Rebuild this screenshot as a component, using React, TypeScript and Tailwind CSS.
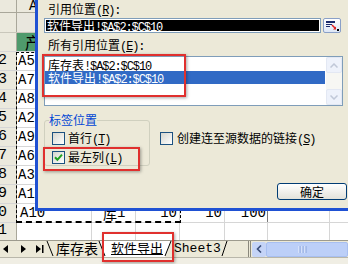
import React from "react";

const A = ({ children }: { children: React.ReactNode }) => (
  <span className="font-['Liberation_Mono'] text-[12px] tracking-[-1.1px]">{children}</span>
);

function Check({ checked = false }: { checked?: boolean }) {
  return (
    <span className="flex h-[13px] w-[13px] shrink-0 items-center justify-center border border-[#1c5180] bg-linear-to-br from-[#d6d6ce] to-white">
      {checked && (
        <svg width="9" height="9" viewBox="0 0 9 9">
          <path d="M1 4.3 L3.4 6.8 L8 1.6" fill="none" stroke="#21a121" strokeWidth="2" />
        </svg>
      )}
    </span>
  );
}

const dataRows = [
  { n: "2", a: "A5" },
  { n: "3", a: "A7" },
  { n: "4", a: "A8" },
  { n: "5", a: "A2" },
  { n: "6", a: "A9" },
  { n: "7", a: "A6" },
  { n: "8", a: "A3" },
  { n: "9", a: "A1" },
];

function RowHead({ n }: { n: string }) {
  return (
    <div className="flex w-[17px] shrink-0 items-end justify-end overflow-hidden border-r border-[#a9a79a] bg-[#ebe9dd] pb-[2px] pr-[9px] font-['Liberation_Mono'] text-[15px] leading-[14px]">
      {n}
    </div>
  );
}

function Rest() {
  return (
    <>
      <div className="w-[44px] shrink-0 border-r border-[#d6d6d6]" />
      <div className="w-[44px] shrink-0 border-r border-[#d6d6d6]" />
      <div className="w-[45px] shrink-0 border-r border-[#d6d6d6]" />
      <div className="w-[43px] shrink-0 border-r border-[#d6d6d6]" />
      <div className="w-[62px] shrink-0 border-r border-[#d6d6d6]" />
      <div className="flex-1" />
    </>
  );
}

export default function App() {
  return (
    <div className="relative h-[264px] w-[348px] overflow-hidden bg-white font-['Noto_Sans_CJK_SC'] text-black">
      {/* spreadsheet */}
      <div className="flex flex-col">
        <div className="flex h-[13px] border-b border-[#a9a79a] bg-[#ebe9dd]">
          <div className="w-[17px] shrink-0 border-r border-[#a9a79a]" />
          <div className="pl-[12px] font-['Liberation_Mono'] text-[14px] leading-[12px]">A</div>
        </div>
        <div className="flex h-[20px] border-b border-[#c9c7bb] bg-[#e9e7de]">
          <div className="w-[17px] shrink-0 border-r border-[#a9a79a] bg-[#ebe9dd]" />
          <div className="w-[75px] shrink-0 border-r border-[#d6d6d6]" />
        </div>
        <div className="flex h-[19px] border-b border-[#d6d6d6]">
          <RowHead n="" />
          <div className="flex w-[75px] shrink-0 items-end border-r border-[#d6d6d6] bg-[#4f9a6c] pb-[1px] pl-[8px] text-[16px] leading-[16px]">
            产品
          </div>
          <Rest />
        </div>
        {dataRows.map((r) => (
          <div key={r.n} className="flex h-[19px] border-b border-[#d6d6d6]">
            <RowHead n={r.n} />
            <div className="flex w-[75px] shrink-0 items-end border-r border-[#d6d6d6] pb-[2px] pl-[1px] font-['Liberation_Mono'] text-[14px] leading-[13px]">
              {r.a}
            </div>
            <Rest />
          </div>
        ))}
        <div className="flex h-[19px] border-b border-[#d6d6d6]">
          <RowHead n="10" />
          <div className="flex w-[75px] shrink-0 items-end border-r border-[#d6d6d6] pb-[2px] pl-[3px] font-['Liberation_Mono'] text-[14px] leading-[13px]">
            A10
          </div>
          <div className="flex w-[44px] shrink-0 items-end border-r border-[#d6d6d6] pb-[2px] pl-[11px] text-[14px] leading-[13px]">
            库<span className="font-['Liberation_Mono']">1</span>
          </div>
          <div className="flex w-[44px] shrink-0 items-end justify-end border-r border-[#d6d6d6] pb-[2px] pr-[2px] font-['Liberation_Mono'] text-[14px] leading-[13px]">
            10
          </div>
          <div className="flex w-[45px] shrink-0 items-end justify-end border-r border-[#d6d6d6] pb-[2px] pr-[2px] font-['Liberation_Mono'] text-[14px] leading-[13px]">
            10
          </div>
          <div className="flex w-[43px] shrink-0 items-end justify-end border-r border-[#7a7a7a] pb-[2px] pr-[1px] font-['Liberation_Mono'] text-[14px] leading-[13px]">
            100
          </div>
          <div className="w-[62px] shrink-0 border-r border-[#d6d6d6]" />
          <div className="flex-1" />
        </div>
        <div className="flex h-[17px]">
          <RowHead n="11" />
          <div className="w-[75px] shrink-0 border-r border-[#d6d6d6]" />
          <Rest />
        </div>

        {/* sheet tabs bar */}
        <div className="flex h-[24px] flex-col border-t border-[#9d9b8e] bg-[#ece9d8]">
          <div className="flex h-[16px] items-center">
            <div className="flex w-[45px] shrink-0 items-center pl-[3px]">
              <svg width="6" height="8" viewBox="0 0 6 8">
                <path d="M0 4 L5 0 L5 8 Z" fill="#000" />
              </svg>
              <svg className="ml-[11px]" width="6" height="8" viewBox="0 0 6 8">
                <path d="M1 0 L6 4 L1 8 Z" fill="#000" />
              </svg>
              <svg className="ml-[10px]" width="8" height="8" viewBox="0 0 8 8">
                <path d="M0 0 L5 4 L0 8 Z" fill="#000" />
                <rect x="6" y="0" width="1.5" height="8" fill="#000" />
              </svg>
            </div>
            {/* tab 1 */}
            <svg width="9" height="16" viewBox="0 0 9 16" className="shrink-0">
              <path d="M2 0 L8 15" stroke="#000" strokeWidth="1" fill="none" />
            </svg>
            <div className="h-[16px] pl-[2px] text-[14px] leading-[15px]">库存表</div>
            {/* active tab */}
            <svg width="9" height="16" viewBox="0 0 9 16" className="shrink-0">
              <path d="M1 0 L9 0 L9 16 L7 16 Z" fill="#fff" />
              <path d="M1 0 L7 15" stroke="#000" strokeWidth="1" fill="none" />
            </svg>
            <div className="h-[16px] bg-white pl-[4px] pr-[1px] text-[13px] leading-[14px] underline underline-offset-[1px]">
              软件导出
            </div>
            <svg width="8" height="16" viewBox="0 0 8 16" className="shrink-0">
              <path d="M0 0 L7 0 L1 16 L0 16 Z" fill="#fff" />
              <path d="M1 15 L7 0" stroke="#000" strokeWidth="1" fill="none" />
            </svg>
            <div className="h-[16px] pl-[2px] font-['Liberation_Mono'] text-[13px] leading-[15px]">
              Sheet3
            </div>
            <svg width="8" height="16" viewBox="0 0 8 16" className="shrink-0">
              <path d="M1 15 L6 0" stroke="#000" strokeWidth="1" fill="none" />
            </svg>
            <div className="flex-1" />
            <div className="h-[16px] w-[3px] border-l border-r border-[#8a887c] bg-[#ece9d8]" />
            <div className="ml-[1px] flex h-[15px] w-[14px] items-center justify-center rounded-[2px] bg-[#c5d4f7]">
              <svg width="6" height="8" viewBox="0 0 6 8">
                <path d="M5 0.5 L1.5 4 L5 7.5" stroke="#3b4e7a" strokeWidth="1.6" fill="none" />
              </svg>
            </div>
            <div className="flex h-[15px] w-[82px] items-center justify-center rounded-[2px] border border-[#a8bff0] bg-[#bccff8] pr-[10px]">
              <svg width="9" height="7" viewBox="0 0 9 7">
                <path d="M1 0 V7 M4 0 V7 M7 0 V7" stroke="#eef3ff" strokeWidth="1" />
                <path d="M2 0 V7 M5 0 V7 M8 0 V7" stroke="#8ca6dc" strokeWidth="1" />
              </svg>
            </div>
          </div>
          <div className="flex-1 border-t border-[#b9b7aa] bg-[#f0eee4]" />
        </div>
      </div>

      {/* copy range marching ants */}
      <div className="absolute left-[16px] top-[52px] h-[171px] w-[165px] border-l border-r border-t border-b-2 border-dashed border-black" />

      {/* dialog */}
      <div className="absolute left-[35px] top-0 h-[211px] w-[313px] border-b-[3px] border-l-[3px] border-[#1f51d3] bg-[#ece9d8] text-[12px] leading-[14px]">
        <div className="flex flex-col">
          <div className="ml-[10px] mt-[2px] h-[14px]">
            引用位置<A>(<u>R</u>):</A>
          </div>
          <div className="ml-[6px] mt-[2px] flex h-[15px]">
            <div className="flex w-[277px] border border-[#7f9db9] bg-white p-[1px]">
              <div className="flex-1 whitespace-nowrap bg-black pl-[1px] text-[12px] leading-[11px] text-white">
                软件导出<A>!$A$2:$C$10</A>
              </div>
            </div>
            <div className="ml-[2px] flex h-[15px] w-[18px] items-center justify-center rounded-[2px] border border-[#8aa0c8] bg-linear-to-b from-white to-[#dde6f5]">
              <svg width="13" height="10" viewBox="0 0 13 10">
                <rect x="0" y="0" width="9" height="2" fill="#1c2c6c" />
                <rect x="0" y="3" width="6" height="1" fill="#1c2c6c" />
                <rect x="0" y="5" width="4" height="1" fill="#1c2c6c" />
                <path d="M6 4 L9.5 7.5" stroke="#e02020" strokeWidth="1.5" />
                <path d="M7 8.5 L10 8.5 L10 5.5 Z" fill="#e02020" />
                <rect x="11" y="8" width="2" height="2" fill="#000" />
              </svg>
            </div>
          </div>
          <div className="ml-[10px] mt-[5px] h-[14px]">
            所有引用位置<A>(<u>E</u>):</A>
          </div>
          <div className="ml-[6px] mt-[4px] flex h-[50px] w-[299px] border border-[#7f9db9] bg-white">
            <div className="mr-[1px] flex flex-1 flex-col pt-[1px]">
              <div className="h-[13px] whitespace-nowrap pl-[3px] leading-[13px]">
                库存表<A>!$A$2:$C$10</A>
              </div>
              <div className="h-[13px] whitespace-nowrap bg-[#316ac5] pl-[3px] leading-[13px] text-white">
                软件导出<A>!$A$2:$C$10</A>
              </div>
            </div>
            <div className="flex w-[16px] flex-col justify-between bg-[#f7f7f3]">
              <div className="flex h-[16px] items-center justify-center rounded-[2px] border border-[#e3e8f3] bg-[#eef2fb]">
                <svg width="8" height="5" viewBox="0 0 8 5">
                  <path d="M0.5 4.5 L4 1 L7.5 4.5" stroke="#c0c8d8" strokeWidth="1.5" fill="none" />
                </svg>
              </div>
              <div className="flex h-[16px] items-center justify-center rounded-[2px] border border-[#e3e8f3] bg-[#eef2fb]">
                <svg width="8" height="5" viewBox="0 0 8 5">
                  <path d="M0.5 0.5 L4 4 L7.5 0.5" stroke="#c0c8d8" strokeWidth="1.5" fill="none" />
                </svg>
              </div>
            </div>
          </div>
          <div className="ml-[6px] mt-[7px] flex h-[53px]">
            <fieldset className="h-[53px] w-[106px] rounded-[3px] border border-[#d0d0bf] px-[4px]">
              <legend className="px-0 leading-[14px] text-[#0046d5]">标签位置</legend>
              <div className="mt-[5px] flex h-[13px] items-center pl-[3px]">
                <Check />
                <span className="ml-[3px] whitespace-nowrap leading-[13px]">
                  首行<A>(<u>T</u>)</A>
                </span>
              </div>
              <div className="mt-[6px] flex h-[13px] items-center pl-[3px]">
                <Check checked />
                <span className="ml-[3px] whitespace-nowrap leading-[13px]">
                  最左列<A>(<u>L</u>)</A>
                </span>
              </div>
            </fieldset>
            <div className="ml-[10px] mt-[19px] flex h-[13px] items-center">
              <Check />
              <span className="ml-[4px] whitespace-nowrap leading-[13px]">
                创建连至源数据的链接<A>(<u>S</u>)</A>
              </span>
            </div>
          </div>
          <div className="mt-[17px] flex justify-end pr-[1px]">
            <button className="flex h-[17px] w-[70px] items-center justify-center rounded-[3px] border border-[#003c74] bg-linear-to-b from-white to-[#e2e2da] text-[12px] leading-[14px]">
              确定
            </button>
          </div>
        </div>
      </div>

      {/* red annotation boxes */}
      <div className="absolute left-[42px] top-[54px] h-[43px] w-[144px] border-2 border-[#e0302e] shadow-[1px_1px_3px_rgba(0,0,0,0.35)]" />
      <div className="absolute left-[43px] top-[147px] h-[24px] w-[97px] border-2 border-[#e0302e] shadow-[1px_1px_3px_rgba(0,0,0,0.35)]" />
      <div className="absolute left-[102px] top-[232px] h-[30px] w-[72px] border-2 border-[#e0302e] shadow-[1px_1px_3px_rgba(0,0,0,0.35)]" />
    </div>
  );
}
